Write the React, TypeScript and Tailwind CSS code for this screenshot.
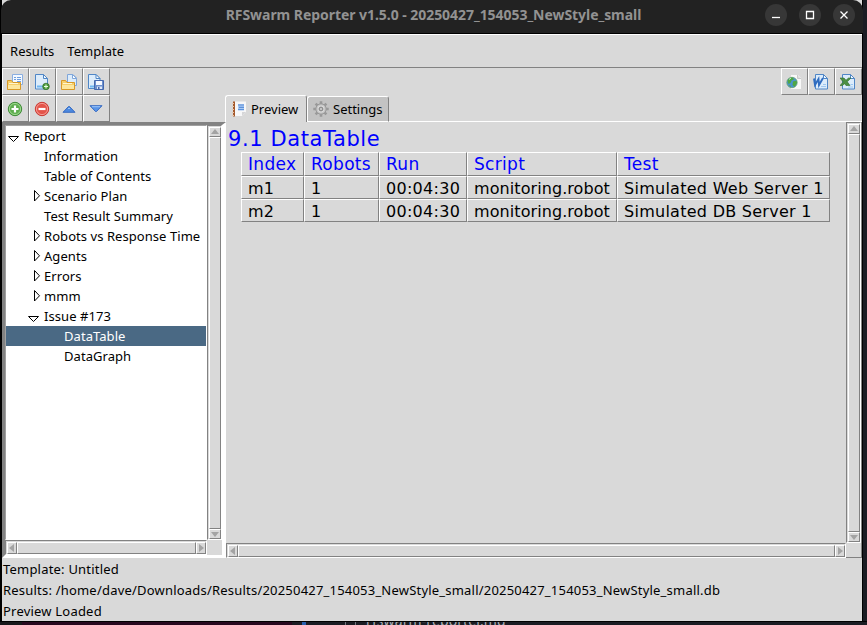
import type { ReactNode } from "react";

const RAISED = "border border-t-white border-l-white border-r-[#828282] border-b-[#828282]";
const SUNKEN = "border border-t-[#828282] border-l-[#828282] border-r-white border-b-white";

function Icon({ children }: { children: ReactNode }) {
  return (
    <svg width="16" height="16" viewBox="0 0 16 16" className="shrink-0">
      {children}
    </svg>
  );
}

function Page({ x = 2 }: { x?: number }) {
  return (
    <g>
      <path d={`M${x + 0.5} .5h8l4 4v10.500h-12z`} fill="#dcecfb" stroke="#4f86c6" />
      <path d={`M${x + 8.5} .5v4h4z`} fill="#f5faff" stroke="#4f86c6" />
    </g>
  );
}

function Folder() {
  return (
    <g>
      <path d="M.5 15.500V6.500h4l1.500 2h7.500v7z" fill="#f7cf6a" stroke="#d99a27" />
      <path d="M1 11h12v4H1z" fill="#fde79e" />
      <path d="M2 9.500h9" stroke="#fff6d0" />
    </g>
  );
}

function OpenResults() {
  return (
    <Icon>
      <path d="M5.500.5h10v10h-10z" fill="#f4f9ff" stroke="#8aaee0" />
      <path d="M7 3.500h2M10 3.500h4M7 5.500h2M10 5.500h4M10 7.500h4" stroke="#6f9fe0" />
      <Folder />
    </Icon>
  );
}

function NewTemplate() {
  return (
    <Icon>
      <Page x={1} />
      <path d="M3 12.500h6" stroke="#6fb6f0" strokeWidth="2" />
      <circle cx="12" cy="12.500" r="3.300" fill="#4c9a3c" stroke="#2f6d29" strokeWidth=".7" />
      <path d="M12 10.500v4M10 12.500h4" stroke="#e9ffe0" />
    </Icon>
  );
}

function OpenTemplate() {
  return (
    <Icon>
      <path d="M6.500.5h5.500l3.500 3.500v7.500h-9z" fill="#dcecfb" stroke="#7fa6da" />
      <path d="M11.500.5v4h4z" fill="#fff" stroke="#7fa6da" />
      <Folder />
    </Icon>
  );
}

function SaveTemplate() {
  return (
    <Icon>
      <path d="M.5.5h7.500l4 4v10h-11.500z" fill="#dcecfb" stroke="#4f86c6" />
      <path d="M8 .5v4h4z" fill="#fff" stroke="#4f86c6" />
      <path d="M2 12.500h4" stroke="#6fb6f0" strokeWidth="2" />
      <path d="M6.500 6.500h9v9h-9z" fill="#6d91cf" stroke="#4568ae" />
      <path d="M8 7h6v4H8z" fill="#f5f8ff" />
      <path d="M9 12.500h5V15H9z" fill="#dfe7f5" />
      <path d="M10 13h1.500v2H10z" fill="#4568ae" />
    </Icon>
  );
}

function RoundIcon({ plus }: { plus?: boolean }) {
  return (
    <Icon>
      <circle cx="8" cy="8" r="6.700" fill={plus ? "#5fae4f" : "#e4544a"} stroke={plus ? "#3f8a38" : "#c93a34"} />
      <circle cx="8" cy="8" r="5.600" fill="none" stroke={plus ? "#a5dc96" : "#f6a49c"} strokeWidth=".9" />
      <path d={plus ? "M4.500 8h7M8 4.500v7" : "M4.500 8h7"} stroke="#fff" strokeWidth="2.200" />
    </Icon>
  );
}

function Arrow({ up }: { up?: boolean }) {
  return (
    <Icon>
      <path
        d={up ? "M2 11.300L7.500 5.500h1L14 11.300z" : "M2 4.700L7.500 10.500h1L14 4.700z"}
        fill={up ? "#4d8ae0" : "#5a95e8"}
        stroke="#2c62bd"
        strokeWidth=".9"
      />
      <path d={up ? "M7 7.500h2" : "M4 5.700h8"} stroke="#9cc5f8" />
    </Icon>
  );
}

function HtmlIcon() {
  return (
    <Icon>
      <path d="M5 1h7l3 3v11H5z" fill="#f8f8f8" />
      <path d="M11.500 1v3.500H15" fill="#ddd" stroke="#c2c2c2" strokeWidth=".8" />
      <circle cx="6" cy="8.500" r="5.200" fill="#4a93cf" stroke="#6ba36f" strokeWidth=".8" />
      <path d="M1.500 6.500q2-3.500 5-3l1.500 2-2.500 1-1 2.500-2 1zM7 7.500l3.500-1 .5 2.500-2.500 4-2-2zM2.500 11l2 .5.500 1.800z" fill="#4fa743" />
      <path d="M3 5.500l2-1.500" stroke="#c8efc0" />
    </Icon>
  );
}

function WordIcon() {
  return (
    <Icon>
      <Page x={2} />
      <path d="M1 4.500l1 6.500L5.500 5l.5 6L10 4" fill="none" stroke="#2f6cc0" strokeWidth="1.900" />
      <path d="M8 12.500h5M10 10.500h3" stroke="#9ec7f0" />
    </Icon>
  );
}

function ExcelIcon() {
  return (
    <Icon>
      <Page x={2} />
      <path d="M0 4h4l2 2.200L8.500 4H11L7.300 7.800 10 11.500H6L4.500 9.700 2.500 11.500H0L3.200 8z" fill="#4c8f43" stroke="#2f6e2c" strokeWidth=".6" />
      <path d="M8 13h5M10.500 10.500H13" stroke="#9ec7f0" />
    </Icon>
  );
}

function NotebookIcon() {
  return (
    <Icon>
      <path d="M3 .5h11v10.500l-4 4H3z" fill="#f7f7f8" />
      <path d="M14 11l-4 4v-4z" fill="#d6d6d8" />
      <path d="M1 .5h2v15H1z" fill="#a65a2c" />
      <path d="M0 2.500h2M0 5.500h2M0 8.500h2M0 11.500h2M0 14.500h2" stroke="#e6c7ae" />
      <path d="M6 4h6M6 8.500h6" stroke="#5c92dd" strokeWidth="1.300" />
      <path d="M6 5h6v3H6z" fill="#a9cbf4" />
      <path d="M7 6.300h5" stroke="#4b83d4" />
    </Icon>
  );
}

function GearIcon() {
  return (
    <Icon>
      <g stroke="#999" strokeWidth="2.600">
        <path d="M8 .3v15.400M.3 8h15.400M2.600 2.600l10.800 10.800M13.400 2.600L2.600 13.400" />
      </g>
      <circle cx="8" cy="8" r="5.200" fill="#c4c4c4" stroke="#999" />
      <circle cx="8" cy="8" r="3.400" fill="#dadada" />
      <circle cx="8" cy="8" r="1.900" fill="#c3c3c3" stroke="#777" strokeWidth=".9" />
    </Icon>
  );
}

function ToolButton({ children }: { children: ReactNode }) {
  return <button className={`flex h-[27px] w-[27px] items-center pl-1 ${RAISED}`}>{children}</button>;
}

const TRI = {
  up: "M0 6L4 1l4 5z",
  down: "M0 2h8L4 7z",
  left: "M6 0v8L1 4z",
  right: "M2 0v8l5-4z",
};

function ScrollArrow({ dir }: { dir: keyof typeof TRI }) {
  const size = dir === "up" || dir === "down" ? "h-[10px] w-3" : "h-3 w-[10px]";
  return (
    <div className={`flex shrink-0 items-center justify-center ${size} ${RAISED}`}>
      <svg width="8" height="8" viewBox="0 0 8 8" className="shrink-0">
        <path d={TRI[dir]} fill="#a3a3a3" />
      </svg>
    </div>
  );
}

function VScroll() {
  return (
    <div className={`flex w-[15px] shrink-0 flex-col bg-[#d9d9d9] pt-px pl-px ${SUNKEN}`}>
      <ScrollArrow dir="up" />
      <div className={`w-3 flex-1 ${RAISED}`} />
      <ScrollArrow dir="down" />
    </div>
  );
}

function HScroll() {
  return (
    <div className={`flex h-[15px] flex-1 bg-[#d9d9d9] pt-px pl-px ${SUNKEN}`}>
      <ScrollArrow dir="left" />
      <div className={`h-3 flex-1 ${RAISED}`} />
      <ScrollArrow dir="right" />
    </div>
  );
}

type Node = { label: string; level: number; state?: "open" | "closed"; selected?: boolean };

const TREE: Node[] = [
  { label: "Report", level: 0, state: "open" },
  { label: "Information", level: 1 },
  { label: "Table of Contents", level: 1 },
  { label: "Scenario Plan", level: 1, state: "closed" },
  { label: "Test Result Summary", level: 1 },
  { label: "Robots vs Response Time", level: 1, state: "closed" },
  { label: "Agents", level: 1, state: "closed" },
  { label: "Errors", level: 1, state: "closed" },
  { label: "mmm", level: 1, state: "closed" },
  { label: "Issue #173", level: 1, state: "open" },
  { label: "DataTable", level: 2, selected: true },
  { label: "DataGraph", level: 2 },
];

const INDENT = ["pl-0", "pl-5", "pl-10"];

function TreeRow({ node }: { node: Node }) {
  return (
    <div className={`flex h-5 items-center ${INDENT[node.level]} ${node.selected ? "bg-[#4a6984] text-white" : ""}`}>
      <svg width="18" height="20" viewBox="0 0 18 20" className="shrink-0">
        {node.state === "open" && <path d="M2.500 10.500h10l-5 5z" fill="none" stroke="#000" />}
        {node.state === "closed" && <path d="M8.500 4.500v10.500l5-5.200z" fill="none" stroke="#000" />}
      </svg>
      <span className="tracking-[0.06px]">{node.label}</span>
    </div>
  );
}

const ROWS = [
  ["Index", "Robots", "Run", "Script", "Test"],
  ["m1", "1", "00:04:30", "monitoring.robot", "Simulated Web Server 1"],
  ["m2", "1", "00:04:30", "monitoring.robot", "Simulated DB Server 1"],
];

const CELL_TRACKING = ["tracking-[0.2px]", "tracking-[0.2px]", "tracking-[0.28px]", "tracking-[0.08px]", "tracking-[0.27px]"];

export default function App() {
  return (
    <div className="flex h-[625px] w-[867px] flex-col overflow-hidden whitespace-nowrap bg-[#1b1c23] font-['Noto_Sans',sans-serif] text-[13px] leading-5 text-black">
      <div className="flex h-[621px] w-[863px] flex-col border-r border-l-2 border-black bg-[#d9d9d9]">
        <header className="-mx-px flex h-[34px] shrink-0 rounded-t-[10px] border-b border-black bg-[#222222]">
          <div className="w-[101px]" />
          <h1 className="flex-1 pt-[5px] text-center text-[14px] font-bold tracking-[-0.05px] text-[#929292]">
            RFSwarm Reporter v1.5.0 - 20250427_154053_NewStyle_small
          </h1>
          <div className="flex w-[98px] gap-3 pt-1">
            {["M7 13.500h8", "M7.500 7.500h7v7h-7z", "M7.500 7.500l7 7M14.500 7.500l-7 7"].map((d) => (
              <svg key={d} width="22" height="22" viewBox="0 0 22 22">
                <circle cx="11" cy="11" r="11" fill="#373737" />
                <path d={d} fill="none" stroke="#fff" strokeWidth="1.300" />
              </svg>
            ))}
          </div>
        </header>

        <nav className="flex h-[34px] shrink-0 gap-[13px] border-t border-b border-t-white border-b-[#828282] pl-2 pt-[6px] tracking-[0.05px]">
          <span>Results</span>
          <span>Template</span>
        </nav>

        <div className="flex h-[490px] shrink-0">
          <aside className="flex w-[224px] shrink-0 flex-col">
            <div className="grid h-[54px] w-[108px] shrink-0 grid-cols-4">
              <ToolButton><OpenResults /></ToolButton>
              <ToolButton><NewTemplate /></ToolButton>
              <ToolButton><OpenTemplate /></ToolButton>
              <ToolButton><SaveTemplate /></ToolButton>
              <ToolButton><RoundIcon plus /></ToolButton>
              <ToolButton><RoundIcon /></ToolButton>
              <ToolButton><Arrow up /></ToolButton>
              <ToolButton><Arrow /></ToolButton>
            </div>
            <div className="flex flex-1 flex-col border-t-[3px] border-r-[4px] border-b-[3px] border-l-[3px] border-t-[#828282] border-r-white border-b-white border-l-[#828282]">
              <div className="flex flex-1">
                <div className="w-[202px] border border-r-white border-b-white border-l-[#a0a0a0] border-t-[#a0a0a0] bg-white">
                  {TREE.map((n) => (
                    <TreeRow key={n.label} node={n} />
                  ))}
                </div>
                <VScroll />
              </div>
              <div className="flex h-[15px]">
                <HScroll />
                <div className="w-[15px] bg-[#d9d9d9]" />
              </div>
            </div>
          </aside>

          <main className="flex w-[636px] flex-col">
            <div className="flex h-[54px] shrink-0 items-end">
              <div className="-ml-px flex h-[27px] w-[82px] items-center gap-[3px] rounded-t-[3px] border-t border-r border-l border-t-white border-r-[#828282] border-l-white pl-[6px]">
                <NotebookIcon />
                <span className="-mt-px">Preview</span>
              </div>
              <div className="flex h-[26px] w-[82px] items-center gap-1 rounded-t-[3px] border border-t-white border-r-[#828282] border-b-white border-l-white bg-[#c3c3c3] pl-[5px]">
                <GearIcon />
                <span className="-mt-px">Settings</span>
              </div>
              <div className="h-full flex-1 border-b border-white">
                <div className="flex justify-end">
                  <ToolButton><HtmlIcon /></ToolButton>
                  <ToolButton><WordIcon /></ToolButton>
                  <ToolButton><ExcelIcon /></ToolButton>
                </div>
              </div>
            </div>
            <div className="flex flex-1 border-r border-[#828282]">
              <div className="flex-1 pl-[2px] font-['DejaVu_Sans',sans-serif]">
                <h2 className="h-[30px] pt-[3px] text-[21px] leading-7 tracking-[0.6px] text-[#0000ff]">9.1 DataTable</h2>
                <div className="ml-[13px] grid w-[589px] grid-cols-[63px_75px_88px_150px_213px] grid-rows-[24px_23px_23px]">
                  {ROWS.map((row, r) =>
                    row.map((cell, c) => (
                      <div
                        key={`${r}-${c}`}
                        className={`pl-[6px] leading-[23px] ${RAISED} ${r === 0 ? "text-[17px] tracking-[0.3px] text-[#0000ff]" : `text-[16px] ${CELL_TRACKING[c]}`}`}
                      >
                        {cell}
                      </div>
                    )),
                  )}
                </div>
              </div>
              <VScroll />
            </div>
            <div className="flex h-[15px] border-r border-b border-[#828282]">
              <HScroll />
              <div className="w-[15px]" />
            </div>
          </main>
        </div>

        <footer className="flex flex-col gap-px pl-px pt-px tracking-[0.205px]">
          <span>Template: Untitled</span>
          <span>Results: /home/dave/Downloads/Results/20250427_154053_NewStyle_small/20250427_154053_NewStyle_small.db</span>
          <span>Preview Loaded</span>
        </footer>
      </div>
      <div className="flex h-1 overflow-hidden border-t border-black">
        <div className="w-[22px] bg-[#18181b]" />
        <div className="w-[270px] bg-[#28091f]" />
        <div className="ml-[10px] w-1 bg-[#285fae]" />
        <div className="ml-[39px] h-[3px] w-[11px] border-x border-[#70757d]" />
        <div className="-mt-[10px] ml-[10px] h-5 text-[14px] leading-[18px] tracking-[0.1px] text-[#a8adb5]">rfswarm-reporter.md</div>
      </div>
    </div>
  );
}
